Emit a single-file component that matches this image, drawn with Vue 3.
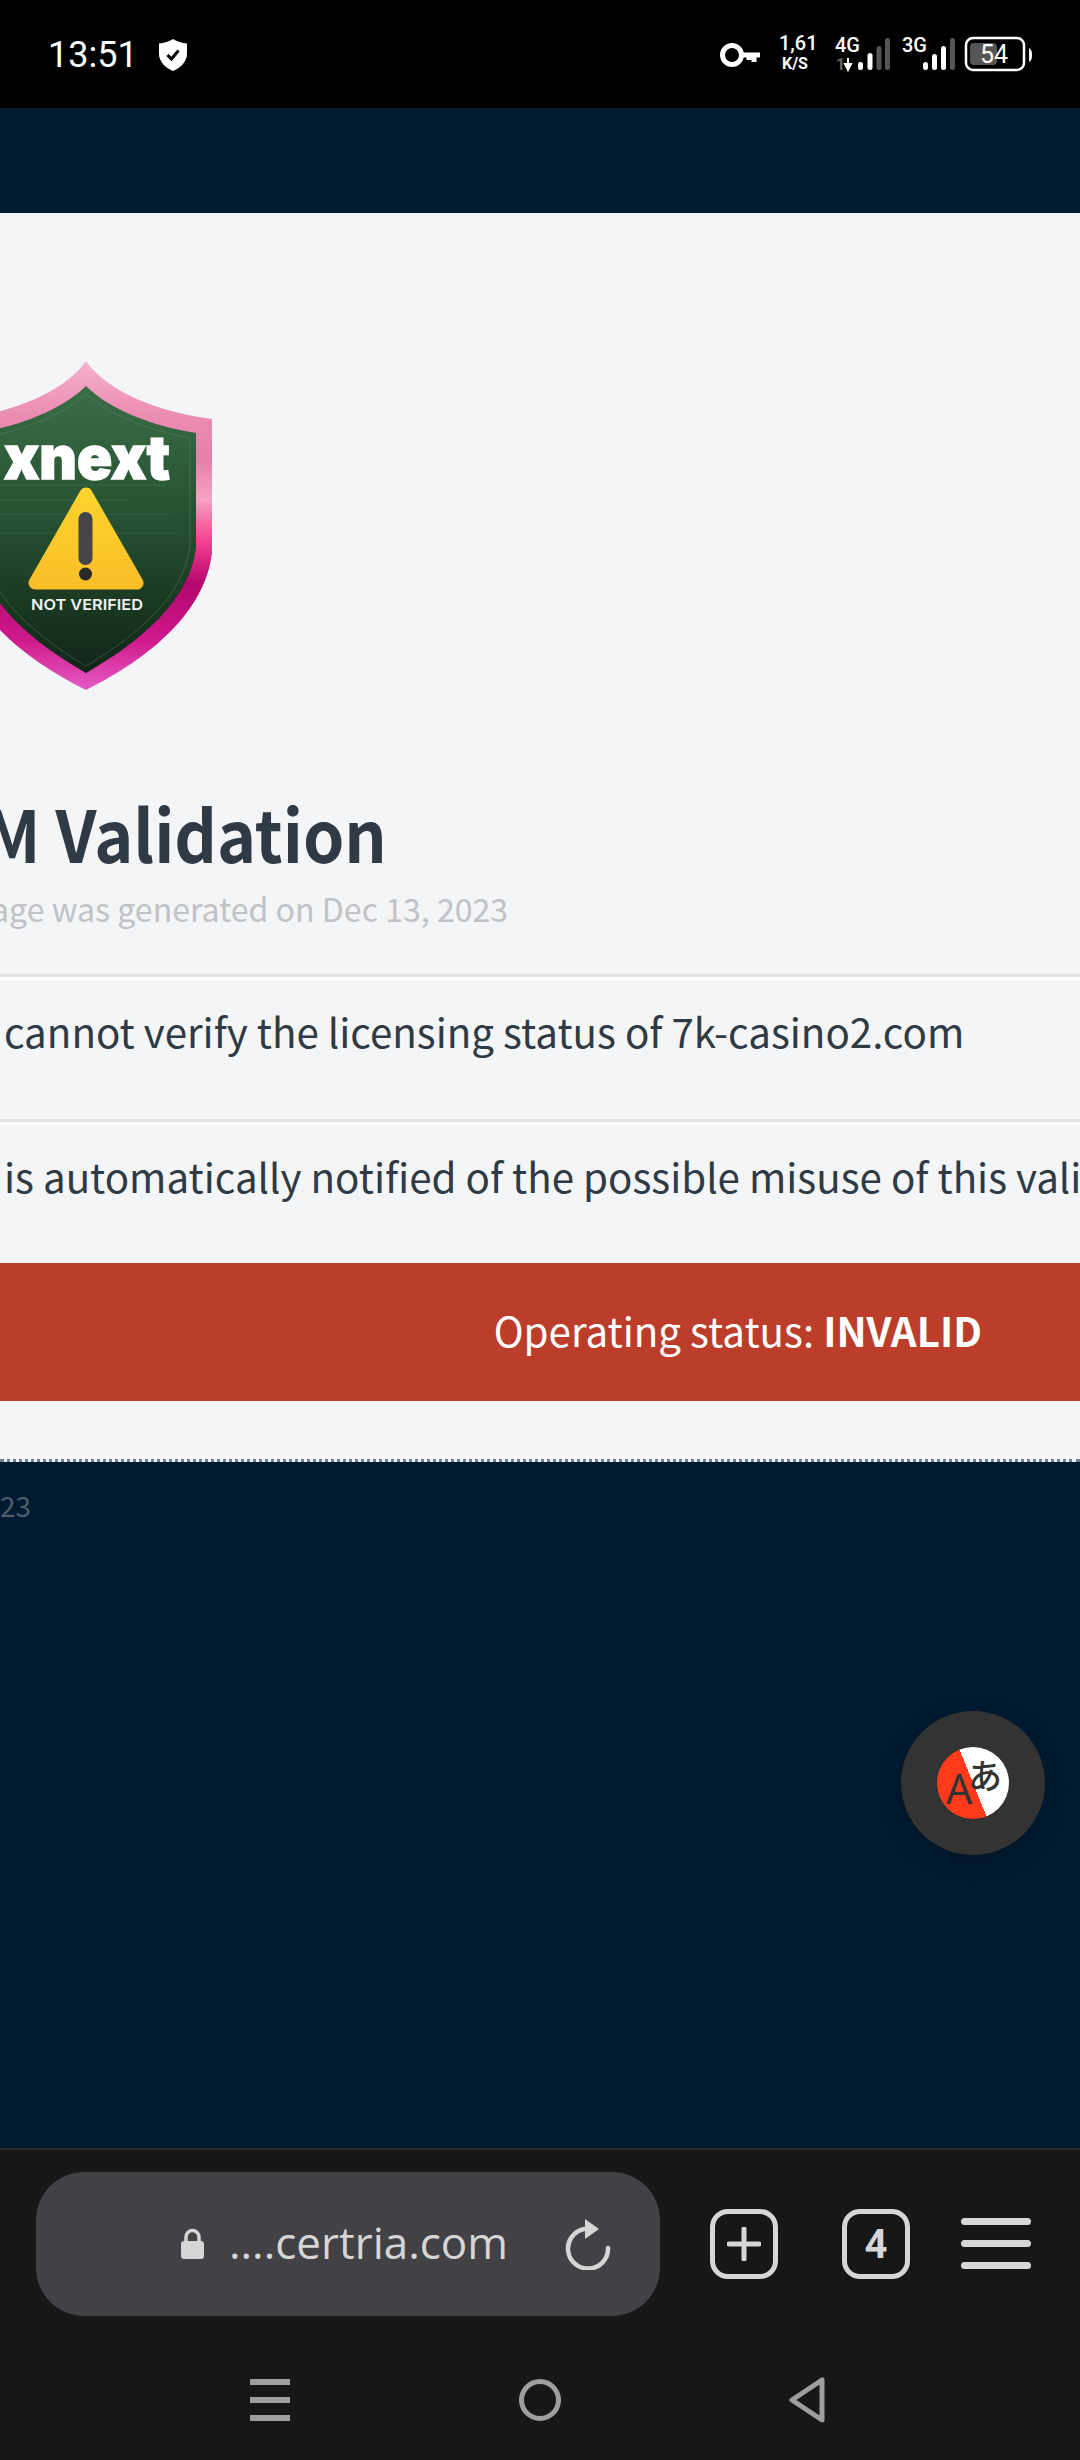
<template>
<div class="screen">
  <div class="status-bar">
    <div class="status-left">
      <span class="clock">13:51</span>
      <svg class="guard" width="30" height="34" viewBox="0 0 30 34">
        <path d="M15 1 C19 3.5 24 5 29 5.5 V16 C29 24 22 30 15 33 C8 30 1 24 1 16 V5.5 C6 5 11 3.5 15 1Z" fill="#fff"/>
        <path d="M9.5 17 L13.5 21 L20.5 12.5" fill="none" stroke="#000" stroke-width="3"/>
      </svg>
    </div>
    <svg class="status-right" width="320" height="44" viewBox="715 32 320 44">
      <circle cx="732" cy="55" r="9.5" fill="none" stroke="#fff" stroke-width="5"/>
      <path d="M741 55 H760 M754 55 V62 M749 55 V60" stroke="#fff" stroke-width="5" fill="none"/>
      <text x="779" y="50" class="net">1,61</text>
      <text x="782" y="69" class="net small">K/S</text>
      <text x="835" y="52" class="net">4G</text>
      <text x="836" y="70" class="arrows">1</text>
      <path d="M848 58 V66 M845 64 L848 70 L851 64Z" stroke="#fff" stroke-width="2" fill="#fff"/>
      <rect v-for="b in bars4" :key="b.x" :x="b.x" :y="b.y" width="5" :height="70 - b.y" rx="2.5" :fill="b.on ? '#fff' : '#555'"/>
      <text x="902" y="52" class="net">3G</text>
      <rect v-for="b in bars3" :key="b.x" :x="b.x" :y="b.y" width="5" :height="70 - b.y" rx="2.5" :fill="b.on ? '#fff' : '#555'"/>
      <rect x="966" y="38" width="58" height="32" rx="7" fill="none" stroke="#fff" stroke-width="2.5"/>
      <rect x="970" y="43" width="27" height="22" rx="4" fill="#555"/>
      <text x="980" y="63" class="batt">54</text>
      <path d="M1029 48 C1031 49 1032 51 1032 55 C1032 59 1031 61 1029 62Z" fill="#fff"/>
    </svg>
  </div>

  <div class="top-nav"></div>

  <main class="card">
    <svg class="badge" width="220" height="340" viewBox="0 355 220 340">
      <defs>
        <linearGradient id="rim" x1="0" y1="0" x2="0" y2="1">
          <stop offset="0" stop-color="#f7b3cd"/>
          <stop offset="0.15" stop-color="#ec8fb4"/>
          <stop offset="0.3" stop-color="#e67fa9"/>
          <stop offset="0.42" stop-color="#f6a3c2"/>
          <stop offset="0.55" stop-color="#f43f8e"/>
          <stop offset="0.68" stop-color="#b3066e"/>
          <stop offset="0.85" stop-color="#d01a8c"/>
          <stop offset="1" stop-color="#e45cc4"/>
        </linearGradient>
        <linearGradient id="plate" x1="0" y1="0" x2="0" y2="1">
          <stop offset="0" stop-color="#3a6e47"/>
          <stop offset="0.5" stop-color="#254e30"/>
          <stop offset="0.8" stop-color="#18351f"/>
          <stop offset="1" stop-color="#10241a"/>
        </linearGradient>
        <linearGradient id="warn" x1="0" y1="0" x2="0" y2="1">
          <stop offset="0" stop-color="#fdd22e"/>
          <stop offset="1" stop-color="#f9bf27"/>
        </linearGradient>
      </defs>
      <path d="M86 361 C108 392 158 412 212 419 V553 C205 612 150 658 86 690 C22 658 -33 612 -40 553 V419 C14 412 64 392 86 361Z" fill="url(#rim)"/>
      <path d="M86 386 C108 408 150 426 196 433 V548 C190 600 140 642 86 673 C32 642 -18 600 -24 548 V433 C22 426 64 408 86 386Z" fill="url(#plate)"/>
      <path d="M86 394 C108 414 146 430 190 438 V546 C184 596 136 636 86 666 C36 636 -12 596 -18 546 V438 C26 430 64 414 86 394Z" fill="none" stroke="#5d8567" stroke-width="0.8" opacity="0.55"/>
      <path d="M0 485 H166 M0 500 H128 M0 514 H172 M0 533 H178" stroke="#4a7557" stroke-width="1" opacity="0.4"/>
      <text x="4" y="479" class="brand" textLength="166" lengthAdjust="spacingAndGlyphs">xnext</text>
      <path d="M86 494 L137 583 H35Z" fill="url(#warn)" stroke="url(#warn)" stroke-width="13" stroke-linejoin="round"/>
      <rect x="78.500" y="512" width="14" height="53" rx="7" fill="#454448"/>
      <circle cx="85.500" cy="574" r="6.500" fill="#29282a"/>
      <text x="31" y="610" class="unverified" textLength="112" lengthAdjust="spacingAndGlyphs">NOT VERIFIED</text>
    </svg>

    <h1 class="title">M Validation</h1>
    <p class="generated">age was generated on Dec 13, 2023</p>

    <div class="row row-first">
      <p>cannot verify the licensing status of 7k-casino2.com</p>
    </div>
    <div class="row row-second">
      <p>is automatically notified of the possible misuse of this vali</p>
    </div>

    <div class="banner">
      <span>Operating status: <b>INVALID</b></span>
    </div>
  </main>

  <footer class="foot">
    <span>23</span>
  </footer>

  <div class="translate">
    <div class="translate-disc">
      <span class="lang-a">A</span>
      <span class="lang-j">あ</span>
    </div>
  </div>

  <div class="browser-bar">
    <div class="url-row">
      <div class="url-pill">
        <svg width="25" height="32" viewBox="0 0 25 32">
          <path d="M6 14 V9 a6.500 6.500 0 0 1 13 0 V14" fill="none" stroke="#d6d6d6" stroke-width="3.500"/>
          <rect x="1" y="13" width="23" height="18" rx="3" fill="#d6d6d6"/>
        </svg>
        <span class="url">....certria.com</span>
        <svg class="reload" width="48" height="52" viewBox="0 0 48 52">
          <path d="M19 11 A20 20 0 1 0 43 30" fill="none" stroke="#d6d6d6" stroke-width="4.500" stroke-linecap="round"/>
          <path d="M20 1 L34 11 L20 21Z" fill="#d6d6d6"/>
        </svg>
      </div>
      <div class="tool-box">
        <svg width="34" height="34" viewBox="0 0 34 34"><path d="M17 2 V32 M2 17 H32" stroke="#d6d6d6" stroke-width="5" stroke-linecap="round"/></svg>
      </div>
      <div class="tool-box tabs">4</div>
      <div class="menu">
        <i></i><i></i><i></i>
      </div>
    </div>
    <div class="nav-row">
      <div class="nav-lines"><i></i><i></i><i></i></div>
      <div class="nav-home"></div>
      <svg width="38" height="46" viewBox="0 0 38 46">
        <path d="M34 3 V43 L4 23Z" fill="none" stroke="#9e9e9e" stroke-width="5" stroke-linejoin="round"/>
      </svg>
    </div>
  </div>
</div>
</template>

<script setup>
const bars4 = [
  { x: 858, y: 62, on: true },
  { x: 867.500, y: 53, on: true },
  { x: 876.500, y: 46, on: false },
  { x: 885, y: 38, on: false },
]
const bars3 = [
  { x: 923, y: 62, on: true },
  { x: 932, y: 54, on: true },
  { x: 941, y: 46, on: true },
  { x: 950, y: 38, on: false },
]
</script>

<style>
html, body {
  margin: 0;
  overflow: hidden;
  background: #021b31;
}
</style>

<style scoped>
.screen {
  position: relative;
  width: 1080px;
  height: 2460px;
  display: flex;
  flex-direction: column;
  overflow: hidden;
  font-family: "Noto Sans CJK SC", "Noto Sans", sans-serif;
  background: #021b31;
}

.status-bar {
  height: 108px;
  background: #000;
  display: flex;
  align-items: flex-start;
  justify-content: space-between;
  flex-shrink: 0;
}
.status-left {
  display: flex;
  align-items: center;
  gap: 20px;
  margin: 37px 0 0 48px;
}
.clock {
  font-family: Roboto, sans-serif;
  font-size: 36px;
  line-height: 36px;
  color: #fff;
}
.status-right {
  margin: 32px 45px 0 0;
}
.net {
  font-family: Roboto, sans-serif;
  font-size: 20px;
  font-weight: 500;
  fill: #fff;
}
.net.small {
  font-size: 16px;
  font-weight: 700;
}
.arrows {
  font-family: Roboto, sans-serif;
  font-size: 16px;
  font-weight: 700;
  fill: #666;
}
.batt {
  font-family: Roboto, sans-serif;
  font-size: 25px;
  fill: #fff;
}

.top-nav {
  height: 105px;
  flex-shrink: 0;
}

.card {
  height: 1249px;
  flex-shrink: 0;
  background: #f4f5f7;
  border-bottom: 3px dotted #6d7f90;
  box-sizing: border-box;
  padding-top: 142px;
  display: flex;
  flex-direction: column;
}
.badge {
  display: block;
  flex-shrink: 0;
}
.brand {
  font-family: Inter, sans-serif;
  font-weight: 900;
  font-size: 60px;
  fill: #fff;
  stroke: #fff;
  stroke-width: 1.5px;
}
.unverified {
  font-family: Inter, sans-serif;
  font-weight: 600;
  font-size: 15px;
  fill: #f2f2f2;
}
.title {
  margin: 92px 0 0 -16px;
  font-size: 72px;
  line-height: 90px;
  font-weight: 700;
  color: #2f3a44;
  white-space: nowrap;
  transform: scaleX(0.92);
  transform-origin: 0 50%;
}
.generated {
  margin: 8px 0 0 -9px;
  font-size: 32.1px;
  line-height: 46px;
  color: #c0c2c5;
  white-space: nowrap;
}
.row {
  flex-shrink: 0;
  border-top: 3px solid #e2e3e5;
  box-shadow: inset 0 3px 0 #fff;
  display: flex;
  align-items: center;
  padding: 0 0 34px 4px;
  box-sizing: border-box;
}
.row p {
  margin: 0;
  font-size: 40.3px;
  line-height: 50px;
  color: #2f3a44;
  white-space: nowrap;
}
.row-first {
  margin-top: 43px;
  height: 145px;
}
.row-second {
  height: 144px;
}
.banner {
  height: 138px;
  flex-shrink: 0;
  background: #bb3d2a;
  color: #fff;
  display: flex;
  align-items: center;
  justify-content: flex-end;
  padding: 0 98px 6px 0;
  box-sizing: border-box;
  font-size: 40.3px;
}

.foot {
  height: 686px;
  flex-shrink: 0;
  padding-top: 23px;
  box-sizing: border-box;
  color: #4f5e6c;
  font-size: 28px;
  line-height: 40px;
}

.translate {
  position: absolute;
  left: 901px;
  top: 1711px;
  width: 144px;
  height: 144px;
  border-radius: 50%;
  background: #333;
  box-shadow: 0 6px 24px rgba(0, 0, 0, 0.25);
  display: flex;
  align-items: center;
  justify-content: center;
}
.translate-disc {
  position: relative;
  width: 72px;
  height: 72px;
  border-radius: 50%;
  overflow: hidden;
  background: linear-gradient(68deg, #ff3b1c 0 50%, #fff 50% 100%);
}
.lang-a {
  position: absolute;
  left: 9px;
  top: 16px;
  font-family: "Noto Sans", sans-serif;
  font-size: 41px;
  line-height: 50px;
  color: #333;
}
.lang-j {
  position: absolute;
  left: 31px;
  top: 5px;
  font-family: "Noto Sans CJK JP", sans-serif;
  font-size: 34px;
  font-weight: 500;
  line-height: 46px;
  color: #333;
}

.browser-bar {
  flex: 1;
  background: #171717;
  border-top: 2px solid #2a2a2a;
  display: flex;
  flex-direction: column;
}
.url-row {
  display: flex;
  align-items: flex-start;
  padding: 22px 0 0 36px;
  height: 166px;
  box-sizing: content-box;
  flex-shrink: 0;
}
.url-pill {
  width: 624px;
  height: 144px;
  border-radius: 48px;
  background: #424146;
  display: flex;
  align-items: center;
  padding-left: 144px;
  box-sizing: border-box;
  color: #d6d6d6;
}
.url {
  margin: 0 0 5px 24px;
  font-family: "Open Sans", sans-serif;
  font-size: 44px;
  line-height: 60px;
}
.reload {
  margin-left: 57px;
}
.tool-box {
  width: 68px;
  height: 70px;
  margin: 37px 0 0 50px;
  border: 5px solid #d6d6d6;
  border-radius: 18px;
  box-sizing: border-box;
  display: flex;
  align-items: center;
  justify-content: center;
}
.tool-box + .tool-box {
  margin-left: 64px;
}
.tabs {
  font-family: Roboto, sans-serif;
  font-size: 40px;
  font-weight: 700;
  color: #d6d6d6;
}
.menu {
  margin: 46px 0 0 51px;
  width: 70px;
  display: flex;
  flex-direction: column;
  gap: 15px;
}
.menu i {
  display: block;
  height: 7px;
  border-radius: 4px;
  background: #d6d6d6;
}
.nav-row {
  display: flex;
  align-items: center;
  padding: 32px 0 0 250px;
  height: 60px;
}
.nav-lines {
  width: 40px;
  display: flex;
  flex-direction: column;
  gap: 12px;
}
.nav-lines i {
  display: block;
  height: 6px;
  background: #9e9e9e;
}
.nav-home {
  width: 42px;
  height: 42px;
  border: 5px solid #9e9e9e;
  border-radius: 50%;
  box-sizing: border-box;
  margin: 0 227px 0 229px;
}
</style>
